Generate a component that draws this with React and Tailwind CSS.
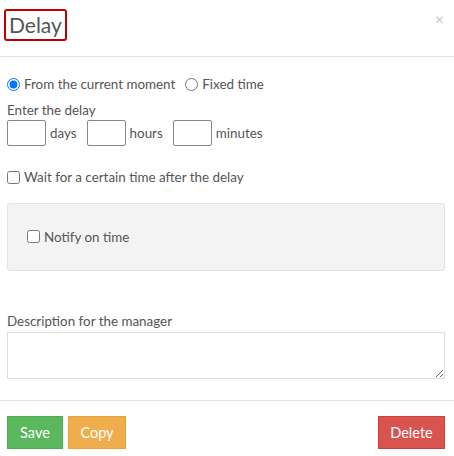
export default function App() {
  return (
    <div className="w-[454px] h-[456px] bg-white text-[#555] text-[13.4px] font-['Lato','Open_Sans',sans-serif] overflow-hidden">
      {/* header */}
      <div className="h-[57px] border-b border-[#e5e5e5] flex justify-between items-start pl-[4px] pr-[10px] pt-[9px]">
        <span className="border-2 border-[#c00000] rounded-[3px] px-[3px] text-[21px] leading-[28px] text-[#555]">Delay</span>
        <span className="text-[#c8c8c8] text-[16px] leading-[16px] mt-[2px]">×</span>
      </div>

      {/* body */}
      <div className="pl-[7px] pr-[9px] pt-[19px]">
        <div className="flex items-center h-[16px]">
          <label className="flex items-center">
            <input type="radio" name="mode" defaultChecked className="m-0 w-[13px] h-[13px]" />
            <span className="ml-[4px]">From the current moment</span>
          </label>
          <label className="flex items-center ml-[10px]">
            <input type="radio" name="mode" className="m-0 w-[13px] h-[13px]" />
            <span className="ml-[4px]">Fixed time</span>
          </label>
        </div>

        <div className="mt-[9px] leading-[18px]">Enter the delay</div>
        <div className="flex items-center mt-[1px]">
          <input className="w-[39px] h-[26px] border border-[#888] rounded-[2px]" />
          <span className="ml-[4px]">days</span>
          <input className="w-[39px] h-[26px] border border-[#888] rounded-[2px] ml-[10px]" />
          <span className="ml-[4px]">hours</span>
          <input className="w-[39px] h-[26px] border border-[#888] rounded-[2px] ml-[10px]" />
          <span className="ml-[4px]">minutes</span>
        </div>

        <label className="flex items-center mt-[23px] h-[16px]">
          <input type="checkbox" className="m-0 w-[13px] h-[13px]" />
          <span className="ml-[4px]">Wait for a certain time after the delay</span>
        </label>

        <div className="mt-[18px] h-[68px] bg-[#f3f3f3] border border-[#e3e3e3] rounded-[3px] flex items-center px-[19px]">
          <label className="flex items-center">
            <input type="checkbox" className="m-0 w-[13px] h-[13px]" />
            <span className="ml-[4px]">Notify on time</span>
          </label>
        </div>

        <div className="mt-[41px] leading-[18px]">Description for the manager</div>
        <textarea className="mt-[2px] block w-full h-[47px] border border-[#ddd]" />
      </div>

      {/* footer */}
      <div className="mt-[21px] border-t border-[#e5e5e5] pl-[7px] pr-[9px] pt-[15px] flex justify-between">
        <div className="flex gap-[5px]">
          <button className="h-[33px] w-[56px] bg-[#5cb85c] border border-[#4cae4c] text-white text-[14.5px]">Save</button>
          <button className="h-[33px] w-[58px] bg-[#f0ad4e] border border-[#eea236] text-white text-[14.5px]">Copy</button>
        </div>
        <button className="h-[33px] w-[67px] bg-[#d9534f] border border-[#d43f3a] text-white text-[14.5px]">Delete</button>
      </div>
    </div>
  );
}
